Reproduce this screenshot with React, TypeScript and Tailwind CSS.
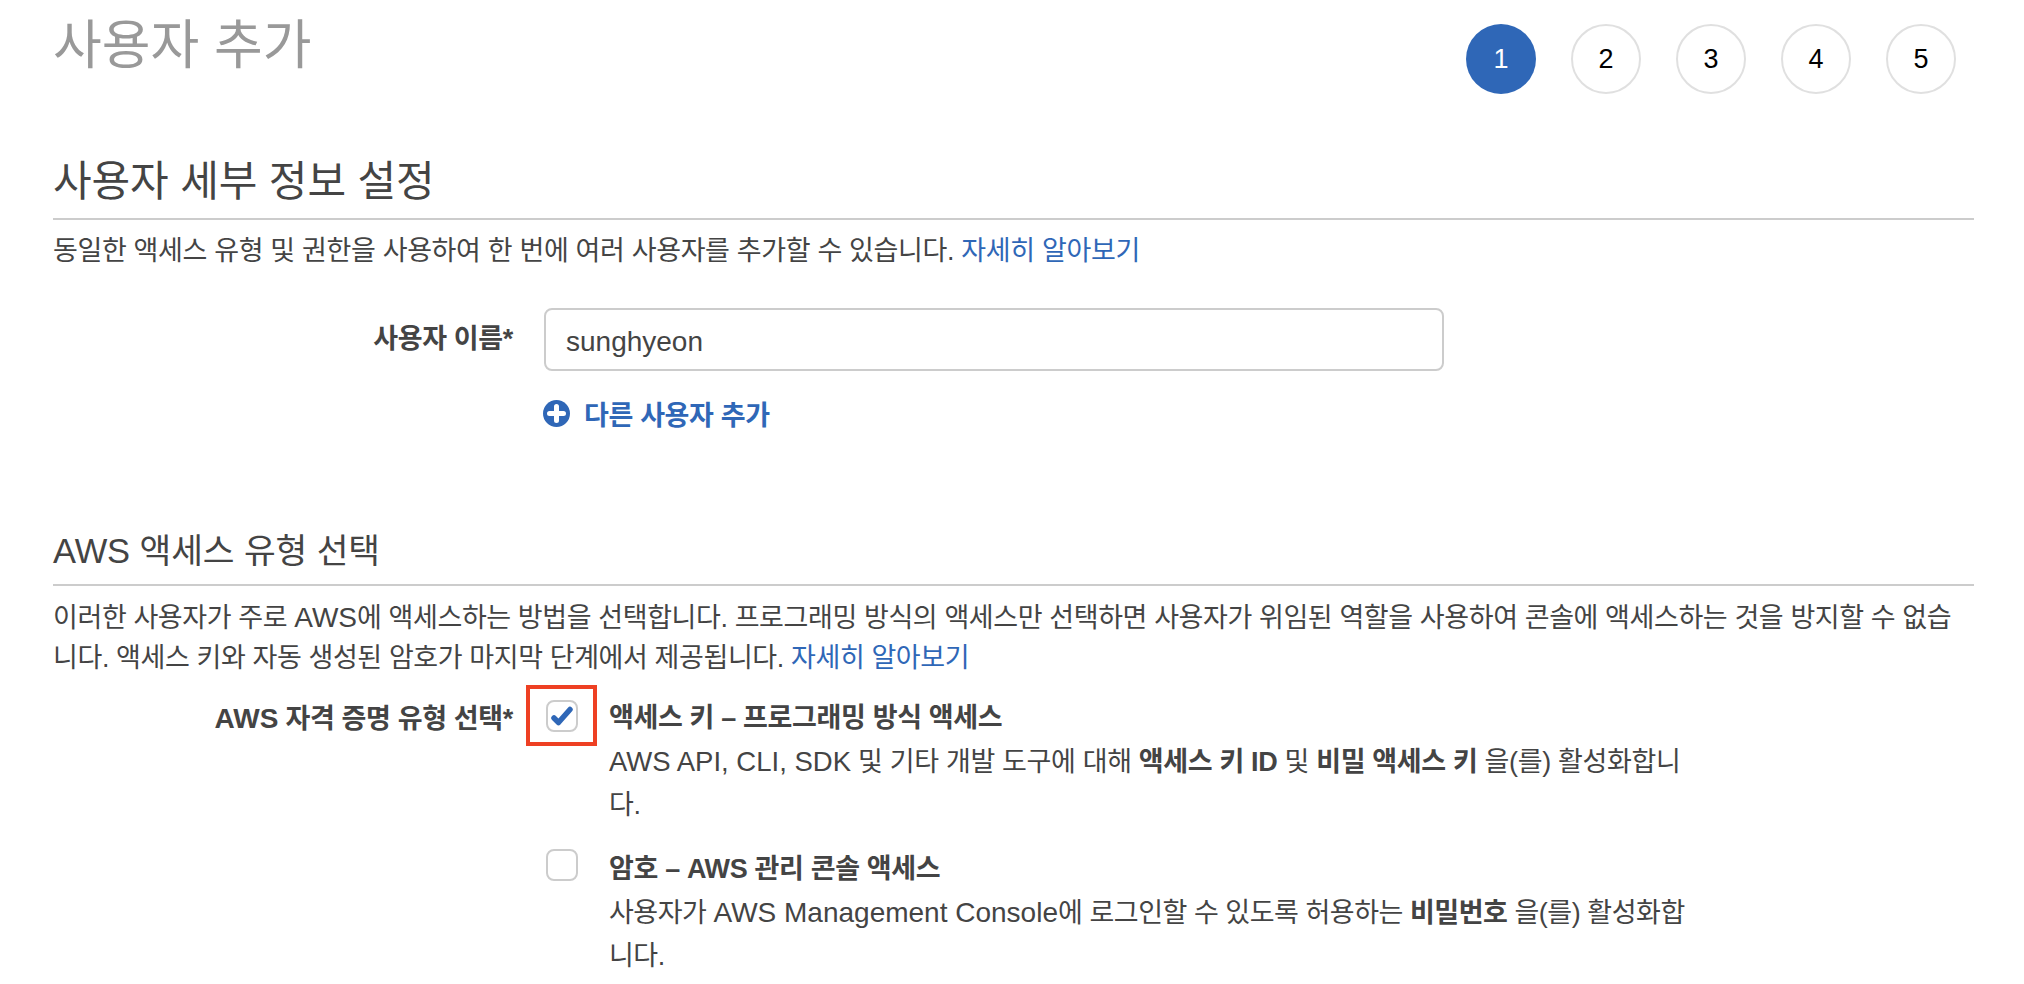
const steps = [1, 2, 3, 4, 5];

function PlusIcon() {
  return (
    <svg width="27" height="27" viewBox="0 0 27 27" className="mt-[7px] shrink-0">
      <circle cx="13.5" cy="13.5" r="13.5" fill="#2f67b7" />
      <path d="M13.5 6.5v14M6.5 13.5h14" stroke="#fff" strokeWidth="5" strokeLinecap="round" />
    </svg>
  );
}

function Checkbox({ checked }: { checked?: boolean }) {
  return (
    <div className="mt-[5px] flex h-8 w-8 shrink-0 items-center justify-center rounded-lg border-2 border-[#cccccc] bg-white">
      {checked && (
        <svg width="24" height="22" viewBox="0 0 24 22">
          <path d="M4 13l4.5 4.5L20 4.5" fill="none" stroke="#2f67b7" strokeWidth="5.5" strokeLinecap="round" strokeLinejoin="round" />
        </svg>
      )}
    </div>
  );
}

export default function App() {
  return (
    <div className="h-[984px] w-[2024px] overflow-hidden bg-white pl-[53px] pr-[50px] text-[27px] leading-[41px] tracking-[-0.35px] text-[#444444] [font-family:'Liberation_Sans','Noto_Sans_CJK_KR',sans-serif]">
      <div className="flex items-start justify-between pr-[18px]">
        <h1 className="mt-[11px] text-[53px] leading-[70px] tracking-normal text-[#999999]">사용자 추가</h1>
        <div className="mt-6 flex gap-[35px] tracking-normal">
          {steps.map((n) => (
            <div
              key={n}
              className={
                n === 1
                  ? "flex h-[70px] w-[70px] items-center justify-center rounded-full bg-[#2f67b7] text-[27px] text-white"
                  : "flex h-[70px] w-[70px] items-center justify-center rounded-full border-2 border-[#e0e0e0] text-[27px] text-black"
              }
            >
              {n}
            </div>
          ))}
        </div>
      </div>

      <h2 className="mt-[63px] border-b-2 border-[#cccccc] pb-[11px] text-[42px] leading-[50px] tracking-[-0.1px]">사용자 세부 정보 설정</h2>
      <p className="mt-[11px]">
        동일한 액세스 유형 및 권한을 사용하여 한 번에 여러 사용자를 추가할 수 있습니다. <a className="text-[#2f67b7]">자세히 알아보기</a>
      </p>

      <div className="mt-[36px] flex">
        <label className="w-[460px] pt-[11px] text-right font-bold">사용자 이름*</label>
        <div className="ml-[31px] flex h-[63px] w-[900px] items-center rounded-lg border-2 border-[#cccccc] px-5 pt-[3px] text-[28px] tracking-normal">sunghyeon</div>
      </div>
      <a className="mt-[22px] ml-[490px] flex items-start gap-[14px] font-bold text-[#2f67b7]">
        <PlusIcon />
        <span className="pt-[3px]">다른 사용자 추가</span>
      </a>

      <h2 className="mt-[91px] border-b-2 border-[#cccccc] pb-[10px] text-[34.5px] leading-[46px] tracking-[-0.1px]">AWS 액세스 유형 선택</h2>
      <p className="mt-[12px] pr-[10px] leading-[40px] tracking-[-0.4px]">
        이러한 사용자가 주로 <span className="text-[28px] tracking-normal">AWS</span>에 액세스하는 방법을 선택합니다. 프로그래밍 방식의 액세스만 선택하면 사용자가 위임된 역할을 사용하여 콘솔에 액세스하는 것을 방지할 수 없습니다. 액세스 키와 자동 생성된 암호가 마지막 단계에서 제공됩니다. <a className="text-[#2f67b7]">자세히 알아보기</a>
      </p>

      <div className="mt-[17px] flex leading-[43px]">
        <label className="w-[460px] pt-[2px] text-right font-bold">
          <span className="text-[28px] tracking-normal">AWS</span> 자격 증명 유형 선택*
        </label>
        <div className="ml-[33px] flex w-[1139px] flex-col gap-[17px]">
          <div className="relative flex gap-[31px]">
            <div className="absolute top-[-10px] left-[-20px] h-[61px] w-[71px] border-4 border-[#ee4023]" />
            <Checkbox checked />
            <div className="pt-[2px]">
              <div className="font-bold">액세스 키 – 프로그래밍 방식 액세스</div>
              <div>
                <span className="text-[27.5px] tracking-normal">AWS API, CLI, SDK</span> 및 기타 개발 도구에 대해 <b>액세스 키 ID</b> 및 <b>비밀 액세스 키</b> 을(를) 활성화합니다.
              </div>
            </div>
          </div>
          <div className="flex gap-[31px]">
            <Checkbox />
            <div className="pt-[4px]">
              <div className="font-bold">암호 – AWS 관리 콘솔 액세스</div>
              <div className="tracking-[-0.47px]">
                사용자가 <span className="text-[28px] tracking-normal">AWS Management Console</span>에 로그인할 수 있도록 허용하는 <b>비밀번호</b> 을(를) 활성화합니다.
              </div>
            </div>
          </div>
        </div>
      </div>
    </div>
  );
}
